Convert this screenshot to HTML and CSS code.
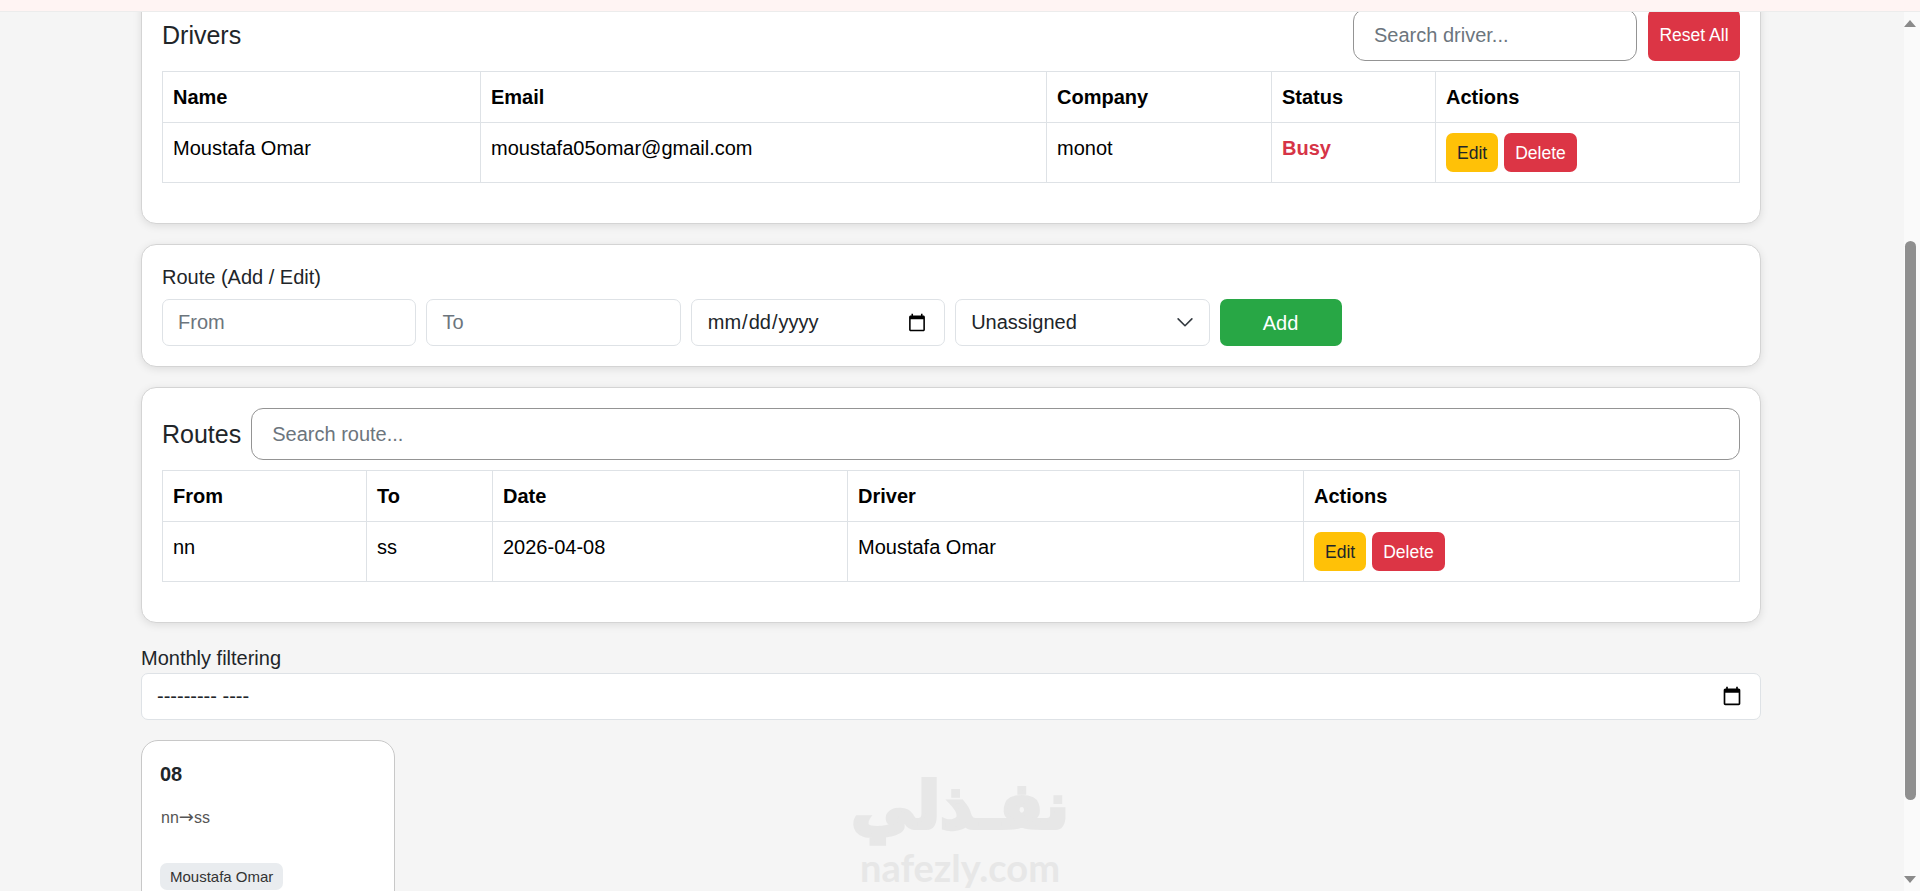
FILE: index.html
```html
<!DOCTYPE html>
<html lang="en">
<head>
<meta charset="utf-8">
<title>Dashboard</title>
<link rel="stylesheet" href="styles.css">
</head>
<body>
<div class="topbar"></div>
<div class="layout">
  <main class="page">
    <section class="card card-first">
      <div class="card-head">
        <h5 class="title title-grow">Drivers</h5>
        <input class="search search-driver" type="text" placeholder="Search driver...">
        <button class="btn btn-sm btn-red btn-reset">Reset All</button>
      </div>
      <table class="table table-drivers">
        <colgroup><col class="d1"><col class="d2"><col class="d3"><col class="d4"><col></colgroup>
        <thead><tr><th>Name</th><th>Email</th><th>Company</th><th>Status</th><th>Actions</th></tr></thead>
        <tbody><tr>
          <td>Moustafa Omar</td><td>moustafa05omar@gmail.com</td><td>monot</td><td class="busy">Busy</td>
          <td><div class="actions"><button class="btn btn-sm btn-yellow">Edit</button><button class="btn btn-sm btn-red">Delete</button></div></td>
        </tr></tbody>
      </table>
    </section>

    <section class="card card-form">
      <div class="form-label">Route (Add / Edit)</div>
      <div class="form-row">
        <input class="field" type="text" placeholder="From">
        <input class="field" type="text" placeholder="To">
        <input class="field" type="date">
        <div class="select-wrap">
          <select class="field field-select"><option>Unassigned</option></select>
          <svg class="chevron" viewBox="0 0 16 16" width="20" height="20"><path d="m2.5 5.5 5.5 5.5 5.5-5.5" fill="none" stroke="#343a40" stroke-width="1.3" stroke-linecap="round" stroke-linejoin="round"/></svg>
        </div>
        <button class="btn btn-green">Add</button>
      </div>
    </section>

    <section class="card">
      <div class="card-head">
        <h5 class="title">Routes</h5>
        <input class="search search-route" type="text" placeholder="Search route...">
      </div>
      <table class="table table-routes">
        <colgroup><col class="r1"><col class="r2"><col class="r3"><col class="r4"><col></colgroup>
        <thead><tr><th>From</th><th>To</th><th>Date</th><th>Driver</th><th>Actions</th></tr></thead>
        <tbody><tr>
          <td>nn</td><td>ss</td><td>2026-04-08</td><td>Moustafa Omar</td>
          <td><div class="actions"><button class="btn btn-sm btn-yellow">Edit</button><button class="btn btn-sm btn-red">Delete</button></div></td>
        </tr></tbody>
      </table>
    </section>

    <div class="monthly-label">Monthly filtering</div>
    <div class="month-wrap">
      <input class="field field-month" type="text" value="--------- ----">
      <svg class="cal" viewBox="0 0 24 24" width="20" height="20"><path d="M20 3h-1V1h-2v2H7V1H5v2H4c-1.1 0-2 .9-2 2v16c0 1.1.9 2 2 2h16c1.1 0 2-.9 2-2V5c0-1.1-.9-2-2-2zm0 18H4V8h16v13z"/></svg>
    </div>

    <div class="day-card">
      <div class="day-num">08</div>
      <div class="day-route">nn<span class="day-arrow">→</span>ss</div>
      <span class="day-badge">Moustafa Omar</span>
    </div>
  </main>
  <aside class="scrollbar">
    <div class="arrow arrow-up"></div>
    <div class="thumb"></div>
    <div class="arrow arrow-down"></div>
  </aside>
</div>
<div class="watermark" aria-hidden="true">
  <div class="wm-ar" dir="rtl">نفـذلي</div>
  <div class="wm-en">nafezly.com</div>
</div>
</body>
</html>
```
FILE: styles.css
```css
* { box-sizing: border-box; }
html, body { margin: 0; height: 891px; overflow: hidden; }
body {
  background: #f5f5f5;
  color: #212529;
  font-family: "Liberation Sans", Arial, sans-serif;
  font-size: 20px;
  line-height: 30px;
}
.topbar {
  position: absolute; top: 0; left: 0; right: 0; height: 12px;
  background: #fff4f3; border-bottom: 1px solid #ececec; z-index: 5;
}
.layout { display: flex; height: 891px; }
.page { flex: 1; min-width: 0; padding-left: 141px; padding-right: 143px; overflow: hidden; }

.card {
  background: #fff;
  border: 1px solid #d4d4d4;
  border-radius: 15px;
  padding: 20px;
  margin-bottom: 20px;
  box-shadow: 0 2px 8px rgba(0,0,0,.1);
}
.card-first { margin-top: -12px; }
.card-head { display: flex; align-items: center; gap: 10px; margin-bottom: 10px; }
.title { margin: 0; font-size: 25px; font-weight: 400; line-height: 30px; }
.title-grow { flex: 1; }
.search {
  height: 52px; padding: 0 20px;
  border: 1px solid #949494; border-radius: 12px;
  font: 20px "Liberation Sans", Arial, sans-serif; color: #212529; background: #fff;
}
.search::placeholder, .field::placeholder { color: #6c757d; opacity: 1; }
.search-driver { width: 284px; }
.search-route { flex: 1; min-width: 0; }

.btn {
  border: 1px solid transparent; border-radius: 7px;
  font: 20px/30px "Liberation Sans", Arial, sans-serif;
  padding: 7px 15px; color: #fff; cursor: pointer;
}
.btn-sm { font-size: 17.5px; line-height: 26px; padding: 5px 10px; height: 39px; }
.btn-reset { height: 52px; width: 92px; padding: 0; margin-left: 1px; }
.btn-red { background: #dc3545; }
.btn-yellow { background: #ffc107; color: #212529; }
.btn-green { background: #28a745; width: 122px; height: 47px; padding: 0; }

.table { width: 100%; border-collapse: collapse; table-layout: fixed; margin-bottom: 20px; color: #000; }
.table th, .table td { border: 1px solid #dee2e6; padding: 10px; text-align: left; vertical-align: top; line-height: 30px; }
.table th { font-weight: 700; }
.d1 { width: 318px; } .d2 { width: 566px; } .d3 { width: 225px; } .d4 { width: 164px; }
.r1 { width: 204px; } .r2 { width: 126px; } .r3 { width: 355px; } .r4 { width: 456px; }
.busy { color: #d63447; font-weight: 700; }
.actions { display: flex; gap: 6px; }

.form-label { line-height: 24px; margin-bottom: 10px; }
.form-row { display: flex; gap: 10px; align-items: flex-start; }
.field {
  width: 254.4px; height: 47px; padding: 0 15px;
  border: 1px solid #dee2e6; border-radius: 7px;
  background: #fff; color: #212529;
  font: 20px "Liberation Sans", Arial, sans-serif;
}
.select-wrap { position: relative; width: 254.4px; height: 47px; }
.field-select { appearance: none; -webkit-appearance: none; width: 100%; padding-bottom: 2px; }
.chevron { position: absolute; right: 15px; top: 13px; pointer-events: none; }

.monthly-label { line-height: 30px; }
.month-wrap { position: relative; margin-bottom: 20px; }
.field-month { display: block; width: 100%; }
.cal { position: absolute; right: 19px; top: 13px; pointer-events: none; }

.day-card {
  width: 254px; height: 300px;
  background: #fff; border: 1px solid #c8c8c8; border-radius: 17px;
  padding: 18px;
}
.day-num { font-weight: 700; line-height: 30px; margin-bottom: 13px; }
.day-route { font-size: 16px; line-height: 30px; color: #555; margin-bottom: 30px; padding-left: 1px; }
.day-arrow { font-family: "DejaVu Sans", sans-serif; font-size: 18px; font-weight: 400; }
.day-badge {
  display: block; width: fit-content; background: #e9ecef; color: #333; border-radius: 7px;
  font-size: 15px; line-height: 27px; padding: 0 10px;
}

.scrollbar { width: 16px; flex: none; background: #fafafa; display: flex; flex-direction: column; align-items: flex-start; padding-top: 20px; }
.arrow { width: 0; height: 0; border-left: 6px solid transparent; border-right: 6px solid transparent; flex: none; }
.arrow-up { border-bottom: 7px solid #8a8a8a; margin-bottom: 214px; }
.thumb { width: 11px; height: 559px; margin-left: 1px; border-radius: 6px; background: #8f8f8f; flex: none; margin-bottom: 76px; }
.arrow-down { border-top: 7px solid #8a8a8a; }

.watermark {
  position: absolute; left: 830px; top: 773px; width: 260px;
  color: #e7e7e7; text-align: center; z-index: 3; pointer-events: none;
}
.wm-ar { font-family: "DejaVu Sans", sans-serif; font-weight: 700; font-size: 64px; line-height: 66px; -webkit-text-stroke: 4px #e7e7e7; }
.wm-en { font-family: "Lato", sans-serif; font-weight: 700; font-size: 38px; line-height: 44px; margin-top: 6px; }
```
